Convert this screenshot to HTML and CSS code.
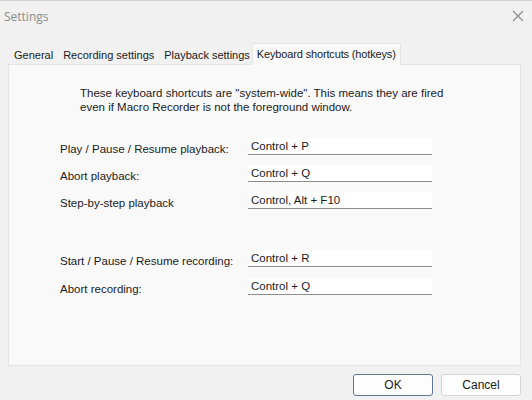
FILE: index.html
```html
<!DOCTYPE html>
<html>
<head>
<meta charset="utf-8">
<link rel="stylesheet" href="styles.css">
</head>
<body>
<div class="window">
  <div class="titlebar">
    <span class="title">Settings</span>
    <svg class="close" width="12" height="12" viewBox="0 0 12 12"><path d="M1 1 L11 11 M11 1 L1 11" stroke="#8a8a8a" stroke-width="1.1" fill="none"/></svg>
  </div>
  <div class="tabs">
    <span class="tab">General</span>
    <span class="tab">Recording settings</span>
    <span class="tab">Playback settings</span>
    <span class="tab active">Keyboard shortcuts (hotkeys)</span>
  </div>
  <div class="panel">
    <p class="intro">These keyboard shortcuts are "system-wide". This means they are fired<br>even if Macro Recorder is not the foreground window.</p>
    <div class="group">
      <div class="row"><span class="label">Play / Pause / Resume playback:</span><span class="field">Control + P</span></div>
      <div class="row"><span class="label">Abort playback:</span><span class="field">Control + Q</span></div>
      <div class="row"><span class="label">Step-by-step playback</span><span class="field">Control, Alt + F10</span></div>
    </div>
    <div class="group second">
      <div class="row"><span class="label">Start / Pause / Resume recording:</span><span class="field">Control + R</span></div>
      <div class="row"><span class="label">Abort recording:</span><span class="field">Control + Q</span></div>
    </div>
  </div>
  <div class="buttons">
    <button class="btn default">OK</button>
    <button class="btn">Cancel</button>
  </div>
</div>
</body>
</html>
```
FILE: styles.css
```css
html, body {
  margin: 0;
  padding: 0;
}
body {
  width: 532px;
  height: 400px;
  overflow: hidden;
  background: #f1f1f1;
  font-family: "Liberation Sans", Arial, sans-serif;
  font-size: 11.5px;
  color: #1b1b1b;
}
.window {
  height: 400px;
  border-top: 1px solid #d0d0d0;
  box-sizing: border-box;
  display: flex;
  flex-direction: column;
}
.titlebar {
  height: 31px;
  display: flex;
  align-items: center;
  justify-content: space-between;
  padding: 0 8px 0 4px;
}
.title {
  font-family: "Open Sans", "Noto Sans", sans-serif;
  font-size: 12px;
  color: #8c8c8c;
}
.close {
  display: block;
  margin-top: -1px;
}
.tabs {
  display: flex;
  align-items: flex-end;
  height: 20px;
  margin-top: 12px;
  padding-left: 9px;
  font-size: 11px;
}
.tab {
  height: 20px;
  line-height: 22px;
  padding: 0 5px;
  white-space: nowrap;
}
.tab.active {
  background: #f9f9fa;
  height: 21px;
  line-height: 21px;
  padding: 0 4px 0 4px;
  margin-left: -3px;
  letter-spacing: -0.15px;
  border: 1px solid #e6e6e6;
  border-bottom: none;
  margin-bottom: -1px;
  position: relative;
  z-index: 1;
}
.panel {
  margin: 0 11px 0 8px;
  height: 302px;
  background: #f9f9fa;
  border: 1px solid #e4e4e4;
  box-sizing: border-box;
}
.intro {
  margin: 21px 0 0 71px;
  line-height: 14px;
}
.group {
  margin: 24px 0 0 51px;
  display: flex;
  flex-direction: column;
  gap: 10px;
}
.group.second {
  margin-top: 41px;
  gap: 11px;
}
.row {
  display: flex;
  align-items: center;
  height: 17px;
}
.label {
  width: 188px;
  padding-top: 5px;
}
.field {
  width: 184px;
  height: 17px;
  box-sizing: border-box;
  background: #ffffff;
  border-bottom: 1px solid #8d8d8d;
  padding: 1px 0 0 3px;
  line-height: 14px;
}
.buttons {
  display: flex;
  justify-content: flex-end;
  gap: 8px;
  margin: 8px 11px 0 0;
}
.btn {
  width: 80px;
  height: 22px;
  box-sizing: border-box;
  background: #fdfdfd;
  border: 1px solid #d4d4d4;
  border-radius: 3px;
  font-family: "Liberation Sans", Arial, sans-serif;
  font-size: 12px;
  color: #1b1b1b;
  padding: 0;
}
.btn.default {
  border-color: #5c7896;
}
```
